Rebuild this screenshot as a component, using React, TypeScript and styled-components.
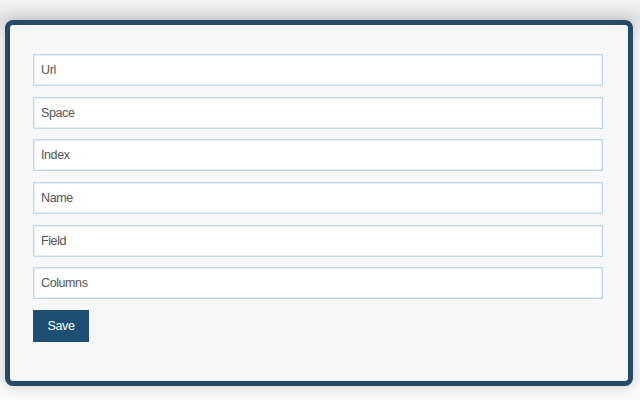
import styled, { createGlobalStyle } from "styled-components";

const GlobalStyle = createGlobalStyle`
  html, body {
    margin: 0;
    padding: 0;
    background: #fbfbfb;
    font-family: "Liberation Sans", Arial, Helvetica, sans-serif;
  }
`;

const fields = ["Url", "Space", "Index", "Name", "Field", "Columns"];

const App = () => {
  return (
    <>
      <GlobalStyle />
      <Page>
        <Card>
          <Form onSubmit={(e) => e.preventDefault()}>
            {fields.map((f) => (
              <StyledInput key={f} placeholder={f} />
            ))}
            <SaveButton type="submit">Save</SaveButton>
          </Form>
        </Card>
      </Page>
    </>
  );
};

export default App;

const Page = styled.div`
  width: 640px;
  height: 400px;
  padding: 20px 7px 0 5px;
  box-sizing: border-box;
  background: linear-gradient(#f4f4f4, #e4e4e4 18px, #fbfbfb 40px);
`;

const Card = styled.div`
  width: 628px;
  height: 366px;
  box-sizing: border-box;
  border: 5px solid #244a67;
  border-radius: 8px;
  background: #f7f7f7;
  box-shadow: 0 0 14px rgba(0, 0, 0, 0.22);
  padding: 29px 25px 0 23px;
`;

const Form = styled.form`
  display: flex;
  flex-direction: column;
  align-items: flex-start;
  gap: 10.7px;
`;

const StyledInput = styled.input`
  width: 100%;
  height: 32px;
  box-sizing: border-box;
  border: 1px solid #bfd7ea;
  box-shadow: inset 0 0 0 1px #e4eff7;
  background: #fff;
  padding: 0 7px;
  font-family: "Liberation Sans", Arial, sans-serif;
  font-size: 12.5px;
  letter-spacing: -0.4px;
  color: #444;
  outline: none;

  &::placeholder {
    color: #555;
  }
`;

const SaveButton = styled.button`
  width: 56px;
  height: 32px;
  border: none;
  background: #1d4e74;
  color: #fff;
  font-family: "Liberation Sans", Arial, sans-serif;
  font-size: 12.5px;
  letter-spacing: -0.4px;
  cursor: pointer;
`;
